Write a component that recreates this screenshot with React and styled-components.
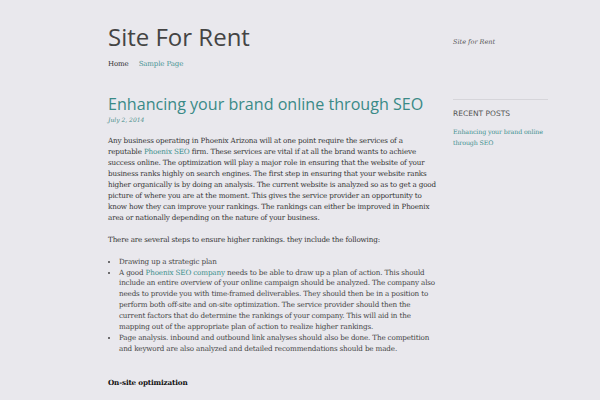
import React from "react";
import styled, { createGlobalStyle } from "styled-components";

const Global = createGlobalStyle`
  html, body { margin: 0; padding: 0; background: #e9e8ed; }
  body { font-family: "DejaVu Serif", serif; color: #333; }
  a { color: #3a8f8c; text-decoration: none; }
`;

const Page = styled.div`
  width: 600px;
  height: 400px;
  overflow: hidden;
  box-sizing: border-box;
  padding: 0 50px 0 108px;
  display: grid;
  grid-template-columns: 320px 95px;
  column-gap: 25px;
`;

const Header = styled.header`
  padding-top: 22px;
`;

const SiteTitle = styled.h1`
  margin: 0;
  font-family: "Open Sans", sans-serif;
  font-weight: normal;
  font-size: 24px;
  line-height: 30px;
  color: #444;
`;

const Nav = styled.nav`
  display: flex;
  gap: 10px;
  margin-top: 7px;
  font-size: 7px;
  letter-spacing: -0.12px;
  line-height: 10px;
`;

const NavItem = styled.a`
  color: ${(p) => (p.$active ? "#333" : "#4a9596")};
`;

const Tagline = styled.div`
  padding-top: 38px;
  font-size: 6.5px;
  font-style: italic;
  color: #555;
  height: 61px;
`;

const Main = styled.main`
  padding-top: 25px;
`;

const PostTitle = styled.h2`
  margin: 0;
  font-family: "Open Sans", sans-serif;
  font-weight: normal;
  font-size: 16.1px;
  line-height: 20px;
  color: #3a8a87;
  white-space: nowrap;
`;

const PostDate = styled.div`
  margin-top: 1px;
  font-size: 6px;
  font-style: italic;
  color: #4a8f8c;
  line-height: 9px;
`;

const Body = styled.div`
  margin-top: 12px;
  font-size: 7.2px;
  letter-spacing: -0.16px;
  line-height: 10.95px;
  color: #333;
`;

const P = styled.p`
  margin: 0 0 11px;
`;

const Line = styled.span`
  display: block;
  white-space: nowrap;
`;

const List = styled.ul`
  margin: 0;
  padding-left: 11px;
  color: #444;
`;

const Sub = styled.h3`
  margin: 23px 0 0;
  font-size: 7.2px;
  line-height: 10.95px;
  font-weight: bold;
  color: #111;
`;

const Sidebar = styled.aside``;

const Widget = styled.section`
  border-top: 1px solid #d6d5da;
  padding-top: 9px;
  width: 95px;
`;

const WidgetTitle = styled.h4`
  margin: 0 0 8px;
  font-family: "DejaVu Sans", sans-serif;
  font-weight: normal;
  font-size: 7.5px;
  line-height: 10px;
  color: #555;
`;

const WidgetLink = styled.a`
  font-size: 6.3px;
  letter-spacing: -0.12px;
  line-height: 10.5px;
  display: block;
  color: #3f908f;
`;

export default function App() {
  return (
    <>
      <Global />
      <Page>
        <div>
          <Header>
            <SiteTitle>Site For Rent</SiteTitle>
            <Nav>
              <NavItem $active href="#">Home</NavItem>
              <NavItem href="#">Sample Page</NavItem>
            </Nav>
          </Header>
          <Main>
            <PostTitle>Enhancing your brand online through SEO</PostTitle>
            <PostDate>July 2, 2014</PostDate>
            <Body>
              <P>
                <Line>Any business operating in Phoenix Arizona will at one point require the services of a</Line>
                <Line>reputable <a href="#">Phoenix SEO</a> firm. These services are vital if at all the brand wants to achieve</Line>
                <Line>success online. The optimization will play a major role in ensuring that the website of your</Line>
                <Line>business ranks highly on search engines. The first step in ensuring that your website ranks</Line>
                <Line>higher organically is by doing an analysis. The current website is analyzed so as to get a good</Line>
                <Line>picture of where you are at the moment. This gives the service provider an opportunity to</Line>
                <Line>know how they can improve your rankings. The rankings can either be improved in Phoenix</Line>
                <Line>area or nationally depending on the nature of your business.</Line>
              </P>
              <P>
                <Line>There are several steps to ensure higher rankings. they include the following:</Line>
              </P>
              <List>
                <li><Line>Drawing up a strategic plan</Line></li>
                <li>
                  <Line>A good <a href="#">Phoenix SEO company</a> needs to be able to draw up a plan of action. This should</Line>
                  <Line>include an entire overview of your online campaign should be analyzed. The company also</Line>
                  <Line>needs to provide you with time-framed deliverables. They should then be in a position to</Line>
                  <Line>perform both off-site and on-site optimization. The service provider should then the</Line>
                  <Line>current factors that do determine the rankings of your company. This will aid in the</Line>
                  <Line>mapping out of the appropriate plan of action to realize higher rankings.</Line>
                </li>
                <li>
                  <Line>Page analysis. inbound and outbound link analyses should also be done. The competition</Line>
                  <Line>and keyword are also analyzed and detailed recommendations should be made.</Line>
                </li>
              </List>
              <Sub>On-site optimization</Sub>
            </Body>
          </Main>
        </div>
        <Sidebar>
          <Tagline>Site for Rent</Tagline>
          <Widget>
            <WidgetTitle>RECENT POSTS</WidgetTitle>
            <WidgetLink href="#">Enhancing your brand online through SEO</WidgetLink>
          </Widget>
        </Sidebar>
      </Page>
    </>
  );
}
